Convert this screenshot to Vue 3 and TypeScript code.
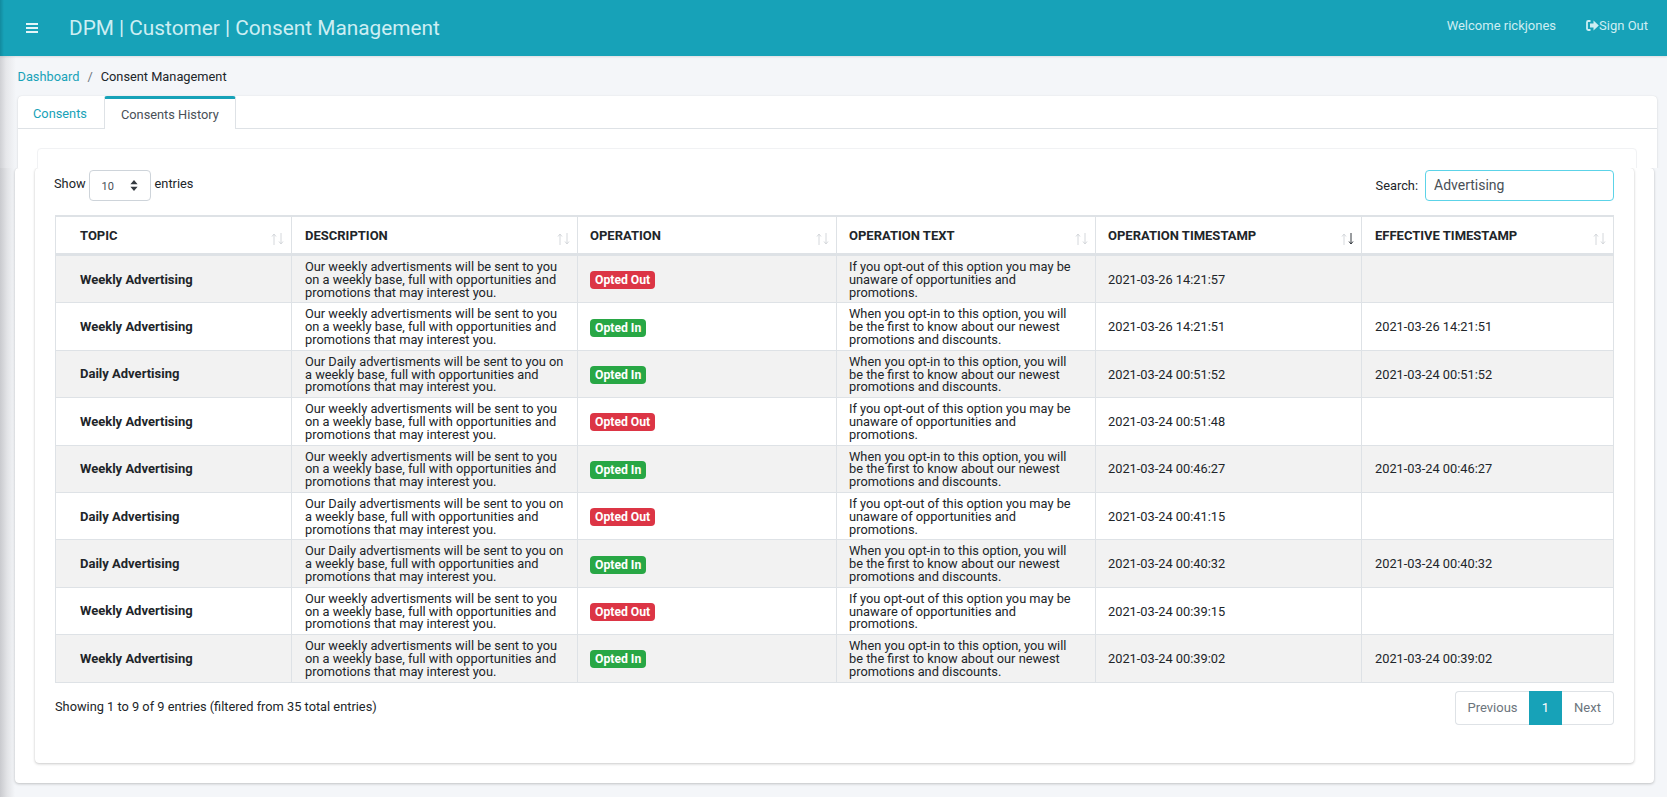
<script setup lang="ts">
interface HistoryRow {
  topic: 'Weekly' | 'Daily'
  optedIn: boolean
  timestamp: string
}

const columns = ['Description', 'Operation', 'Operation Text', 'Operation Timestamp', 'Effective Timestamp']

const rows: HistoryRow[] = [
  { topic: 'Weekly', optedIn: false, timestamp: '2021-03-26 14:21:57' },
  { topic: 'Weekly', optedIn: true, timestamp: '2021-03-26 14:21:51' },
  { topic: 'Daily', optedIn: true, timestamp: '2021-03-24 00:51:52' },
  { topic: 'Weekly', optedIn: false, timestamp: '2021-03-24 00:51:48' },
  { topic: 'Weekly', optedIn: true, timestamp: '2021-03-24 00:46:27' },
  { topic: 'Daily', optedIn: false, timestamp: '2021-03-24 00:41:15' },
  { topic: 'Daily', optedIn: true, timestamp: '2021-03-24 00:40:32' },
  { topic: 'Weekly', optedIn: false, timestamp: '2021-03-24 00:39:15' },
  { topic: 'Weekly', optedIn: true, timestamp: '2021-03-24 00:39:02' },
]

function description(topic: string) {
  return `Our ${topic === 'Daily' ? 'Daily' : 'weekly'} advertisments will be sent to you on a weekly base, full with opportunities and promotions that may interest you.`
}

function operationText(optedIn: boolean) {
  return optedIn
    ? 'When you opt-in to this option, you will be the first to know about our newest promotions and discounts.'
    : 'If you opt-out of this option you may be unaware of opportunities and promotions.'
}
</script>

<template>
  <div class="page">
    <header class="navbar">
      <svg class="burger" width="12" height="10" viewBox="0 0 12 10">
        <path d="M0 0h12v2H0zM0 4h12v2H0zM0 8h12v2H0z" fill="#e4f5f8" />
      </svg>
      <span class="brand">DPM | Customer | Consent Management</span>
      <span class="welcome">Welcome rickjones</span>
      <span class="signout">
        <svg width="13" height="11" viewBox="0 0 13 11">
          <path d="M4.5 1H2.2C1.5 1 1 1.5 1 2.2v6.6C1 9.5 1.5 10 2.2 10h2.3" fill="none" stroke="#cdeef3" stroke-width="1.8" />
          <path d="M4 3.5h3.5V.6l5.3 4.9-5.3 4.9V7.5H4z" fill="#cdeef3" />
        </svg>
        Sign Out
      </span>
    </header>

    <section class="upper">
      <nav class="crumbs">
        <a class="link">Dashboard</a>
        <span class="sep">/</span>
        <span>Consent Management</span>
      </nav>
      <div class="card card-top">
        <div class="tabs">
          <a class="tab">Consents</a>
          <a class="tab active">Consents History</a>
        </div>
        <div class="inner-top"></div>
      </div>
    </section>

    <section class="lower">
      <div class="card card-bottom">
        <div class="inner">
          <div class="controls">
            <div class="length">
              <span class="length-label">Show</span>
              <span class="select-wrap">
                <select class="select">
                  <option>10</option>
                </select>
                <svg class="select-icon" width="8" height="11" viewBox="0 0 8 11">
                  <path d="M4 0l3.6 4.2H.4zM4 11L.4 6.8h7.2z" fill="#343a40" />
                </svg>
              </span>
              <span class="length-label entries">entries</span>
            </div>
            <label class="search">
              Search:
              <input class="search-input" type="text" value="Advertising" />
            </label>
          </div>

          <table class="history">
            <colgroup>
              <col style="width: 236px" />
              <col style="width: 286px" />
              <col style="width: 259px" />
              <col style="width: 259px" />
              <col style="width: 266px" />
              <col style="width: 252px" />
            </colgroup>
            <thead>
              <tr>
                <th class="topic">
                  Topic
                  <svg class="sort" width="13" height="12" viewBox="0 0 13 12">
                    <path d="M3 12V1M1 3.5L3 1l2 2.5" fill="none" stroke="#d5d8dc" />
                    <path d="M10 0v11M8 8.5l2 2.5 2-2.5" fill="none" stroke="#d5d8dc" />
                  </svg>
                </th>
                <th v-for="col in columns" :key="col">
                  {{ col }}
                  <svg class="sort" width="13" height="12" viewBox="0 0 13 12">
                    <path d="M3 12V1M1 3.5L3 1l2 2.5" fill="none" stroke="#d5d8dc" />
                    <path
                      d="M10 0v11M8 8.5l2 2.5 2-2.5"
                      fill="none"
                      :stroke="col === 'Operation Timestamp' ? '#343a40' : '#d5d8dc'"
                    />
                  </svg>
                </th>
              </tr>
            </thead>
            <tbody>
              <tr v-for="row in rows" :key="row.timestamp">
                <td class="topic-cell">{{ row.topic }} Advertising</td>
                <td>{{ description(row.topic) }}</td>
                <td>
                  <span class="badge" :class="row.optedIn ? 'badge-in' : 'badge-out'">
                    {{ row.optedIn ? 'Opted In' : 'Opted Out' }}
                  </span>
                </td>
                <td>{{ operationText(row.optedIn) }}</td>
                <td>{{ row.timestamp }}</td>
                <td>{{ row.optedIn ? row.timestamp : '' }}</td>
              </tr>
            </tbody>
          </table>

          <div class="table-footer">
            <span class="info">Showing 1 to 9 of 9 entries (filtered from 35 total entries)</span>
            <div class="pager">
              <a class="page-btn prev">Previous</a>
              <a class="page-btn current">1</a>
              <a class="page-btn next">Next</a>
            </div>
          </div>
        </div>
      </div>
    </section>
  </div>
</template>

<style>
html,
body {
  margin: 0;
  overflow: hidden;
}
</style>

<style scoped>
.page {
  width: 1667px;
  height: 797px;
  overflow: hidden;
  background: #f4f6f9;
  color: #212529;
  font-family: Roboto, 'Liberation Sans', sans-serif;
  font-size: 12.8px;
}

.navbar {
  height: 56px;
  display: flex;
  align-items: center;
  padding: 0 19px 0 26px;
  box-sizing: border-box;
  background: linear-gradient(90deg, #128a9e 0, #17a2b8 4px);
  color: #cdeef3;
  font-size: 13px;
  box-shadow: 0 1px 2px rgba(0, 0, 0, 0.1);
  position: relative;
}

.brand {
  margin-left: 31px;
  font-size: 20.8px;
  flex: 1;
}

.welcome {
  margin-right: 30px;
  padding-bottom: 6px;
}

.signout {
  display: flex;
  align-items: center;
  padding-bottom: 6px;
}

.upper {
  height: 112px;
  background: linear-gradient(90deg, #cfd0d4 0, #e6e7ea 6px, #f4f6f9 16px);
  overflow: hidden;
}

.crumbs {
  height: 40px;
  padding-left: 17.5px;
  display: flex;
  align-items: center;
  gap: 8px;
  box-sizing: border-box;
}

.link {
  color: #17a2b8;
}

.sep {
  color: #6c757d;
}

.card {
  background: #fff;
  border-radius: 4px;
  box-sizing: border-box;
}

.card-top {
  margin-left: 18px;
  width: 1639px;
  height: 90px;
  box-shadow: 0 0 1px rgba(0, 0, 0, 0.13), 0 1px 3px rgba(0, 0, 0, 0.1);
}

.tabs {
  height: 33px;
  display: flex;
  border-bottom: 1px solid #dee2e6;
  box-sizing: border-box;
}

.tab {
  height: 33px;
  box-sizing: border-box;
  display: flex;
  align-items: center;
  padding: 2px 17px 0 15px;
  color: #17a2b8;
}

.tab.active {
  color: #495057;
  background: #fff;
  border: 1px solid #dee2e6;
  border-top: 3px solid #17a2b8;
  border-bottom: 0;
  border-radius: 3px 3px 0 0;
  padding: 0 16px;
}

.inner-top {
  margin: 19px 0 0 19px;
  width: 1600px;
  height: 40px;
  border: 1px solid #f1f2f4;
  border-radius: 4px;
  box-sizing: border-box;
}

.lower {
  height: 629px;
  background: linear-gradient(90deg, #c9cace 0, #e2e3e6 7px, #f4f6f9 15px);
  overflow: hidden;
}

.card-bottom {
  margin-left: 15px;
  width: 1639px;
  height: 615px;
  padding-left: 20px;
  box-shadow: 0 0 1px rgba(0, 0, 0, 0.13), 0 1px 3px rgba(0, 0, 0, 0.2);
}

.inner {
  width: 1599px;
  height: 595px;
  padding: 2px 20px 0;
  box-sizing: border-box;
  background: #fff;
  border-radius: 4px;
  box-shadow: 0 0 1px rgba(0, 0, 0, 0.13), 0 1px 3px rgba(0, 0, 0, 0.2);
}

.controls {
  height: 45px;
  display: flex;
  justify-content: space-between;
  align-items: flex-start;
}

.length {
  display: flex;
  align-items: flex-start;
  gap: 3px;
  margin-left: -1px;
}

.length-label {
  padding-top: 6px;
}

.entries {
  margin-left: 1px;
}

.select-wrap {
  position: relative;
  display: block;
}

.select {
  display: block;
  appearance: none;
  width: 62px;
  height: 31px;
  padding: 2px 0 0 12px;
  border: 1px solid #ced4da;
  border-radius: 4px;
  background: #fff;
  color: #495057;
  font: 11px Roboto, sans-serif;
}

.select-icon {
  position: absolute;
  top: 10px;
  left: 41px;
}

.search {
  display: flex;
  align-items: center;
  gap: 7px;
}

.search-input {
  width: 189px;
  height: 31px;
  padding: 0 8px 2px;
  box-sizing: border-box;
  border: 1px solid #5cd3e8;
  border-radius: 4px;
  outline: none;
  color: #495057;
  font: 14px Roboto, sans-serif;
}

.history {
  width: 1558px;
  table-layout: fixed;
  border-collapse: collapse;
  line-height: 1;
}

.history th {
  position: relative;
  height: 36px;
  padding: 0 12px;
  text-align: left;
  font-size: 13px;
  font-weight: 700;
  text-transform: uppercase;
  border: 1px solid #dee2e6;
  border-top-width: 2px;
  border-bottom-width: 3px;
}

.history th.topic,
.history td.topic-cell {
  padding-left: 24px;
}

.sort {
  position: absolute;
  top: 16px;
  right: 7px;
}

.history td {
  padding: 5px 12px 3px;
  border: 1px solid #dee2e6;
  vertical-align: middle;
}

.history th:nth-child(2),
.history td:nth-child(2),
.history th:nth-child(6),
.history td:nth-child(6) {
  padding-left: 13px;
}

.history tbody tr:nth-child(odd) {
  background: #f2f2f2;
}

.history td.topic-cell {
  padding-top: 4px;
  padding-bottom: 4px;
  font-size: 13px;
  font-weight: 700;
}

.badge {
  display: inline-block;
  padding: 3px 5px;
  border-radius: 4px;
  color: #fff;
  font-size: 12.2px;
  font-weight: 700;
  line-height: 12px;
}

.badge-in {
  background: #28a745;
}

.badge-out {
  background: #dc3545;
}

.table-footer {
  display: flex;
  justify-content: space-between;
  align-items: flex-start;
  padding-top: 8px;
}

.info {
  padding-top: 8px;
}

.pager {
  display: flex;
  height: 34px;
  font-size: 13px;
}

.page-btn {
  display: flex;
  align-items: center;
  justify-content: center;
  box-sizing: border-box;
  color: #6c757d;
  border: 1px solid #dee2e6;
}

.prev {
  width: 74px;
  border-radius: 4px 0 0 4px;
  border-right: 0;
}

.current {
  width: 33px;
  background: #17a2b8;
  border-color: #17a2b8;
  color: #fff;
}

.next {
  width: 52px;
  border-left: 0;
  border-radius: 0 4px 4px 0;
}
</style>
